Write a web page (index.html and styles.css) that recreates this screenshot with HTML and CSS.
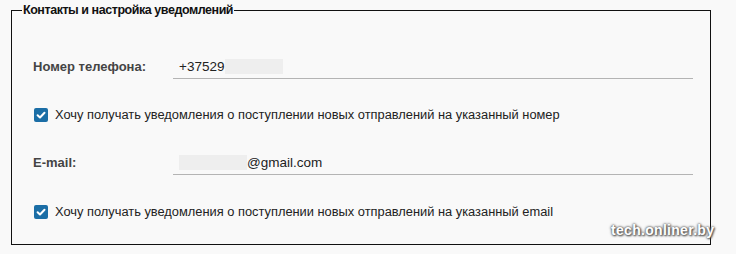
FILE: index.html
```html
<!DOCTYPE html>
<html lang="ru">
<head>
<meta charset="utf-8">
<link rel="stylesheet" href="styles.css">
</head>
<body>
<fieldset class="box">
  <legend class="legend">Контакты и настройка уведомлений</legend>
  <div class="row">
    <div class="label">Номер телефона:</div>
    <div class="field"><span class="val">+37529</span><span class="blur blur-phone"></span></div>
  </div>
  <label class="check">
    <span class="cb"><svg viewBox="0 0 14 14" width="14" height="14"><path d="M3.6 7.2 L6 9.5 L10.5 4.8" fill="none" stroke="#fff" stroke-width="2" stroke-linecap="round" stroke-linejoin="round"/></svg></span>
    <span class="ctext">Хочу получать уведомления о поступлении новых отправлений на указанный номер</span>
  </label>
  <div class="row row-mail">
    <div class="label">E-mail:</div>
    <div class="field"><span class="blur blur-mail"></span><span class="val">@gmail.com</span></div>
  </div>
  <label class="check check-mail">
    <span class="cb"><svg viewBox="0 0 14 14" width="14" height="14"><path d="M3.6 7.2 L6 9.5 L10.5 4.8" fill="none" stroke="#fff" stroke-width="2" stroke-linecap="round" stroke-linejoin="round"/></svg></span>
    <span class="ctext">Хочу получать уведомления о поступлении новых отправлений на указанный email</span>
  </label>
</fieldset>
<div class="wm">tech.onliner.by</div>
</body>
</html>
```
FILE: styles.css
```css
html, body {
  margin: 0;
  padding: 0;
  background: #f9f9f9;
}
body {
  position: relative;
  width: 736px;
  height: 254px;
  overflow: hidden;
  font-family: "Liberation Sans", Arial, sans-serif;
}
.box {
  box-sizing: border-box;
  margin: 3px 0 0 11px;
  width: 700px;
  height: 242px;
  border: 1px solid #111;
  padding: 0 0 0 21px;
}
.legend {
  padding: 0 1px;
  margin-left: -11px;
  font-weight: bold;
  font-size: 12.5px;
  color: #111;
  letter-spacing: -0.45px;
}
.row {
  display: flex;
  align-items: center;
  margin-top: 37px;
  width: 660px;
}
.label {
  width: 140px;
  font-weight: bold;
  font-size: 13px;
  color: #444;
}
.field {
  flex: 1;
  display: flex;
  align-items: center;
  height: 24px;
  border-bottom: 1px solid #b4b4b4;
  padding-left: 6px;
  font-size: 13.5px;
  color: #222;
}
.blur {
  display: inline-block;
  background: #eeeeee;
  height: 15px;
}
.blur-phone { width: 58px; margin-left: 1px; }
.blur-mail { width: 68px; }
.check {
  display: flex;
  align-items: center;
  margin-top: 28px;
  margin-left: 1px;
  font-size: 12.85px;
  color: #222;
}
.cb {
  width: 14px;
  height: 14px;
  border-radius: 2px;
  background: #1b6ea6;
  display: inline-flex;
  margin-right: 7px;
}
.cb svg { display: block; }
.row-mail { margin-top: 28px; }
.check-mail { margin-top: 29px; }
.wm {
  position: absolute;
  left: 611px;
  top: 222px;
  font-weight: bold;
  font-size: 14px;
  color: #fff;
  letter-spacing: 0.3px;
  text-shadow: 0 0 2px #555, 0 0 3px #666, 1px 1px 2px #444;
}
```
